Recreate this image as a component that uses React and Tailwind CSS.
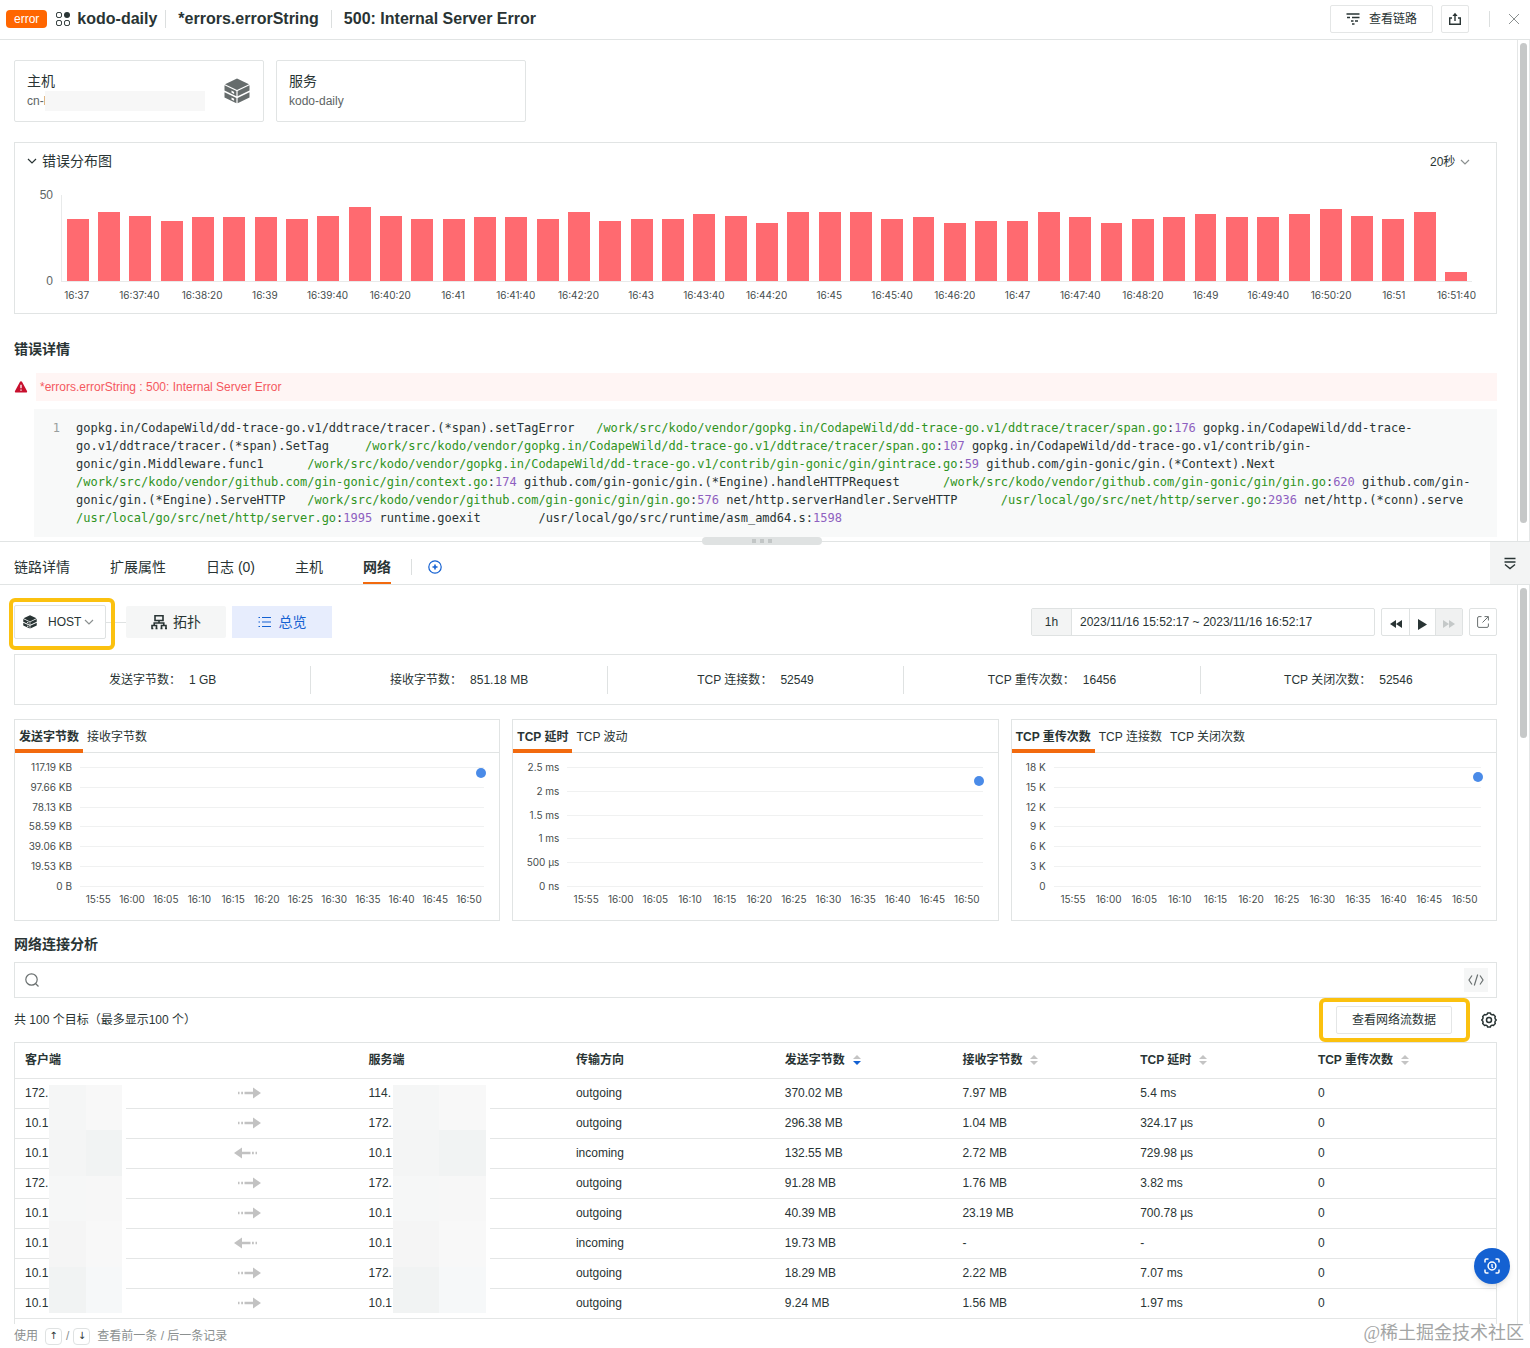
import { Fragment } from "react";

const SANS = "font-['Liberation_Sans','Noto_Sans_CJK_SC',sans-serif]";

const ERROR_BARS = [
  36, 40, 38, 35, 37, 37, 37, 36, 38, 43, 38, 36, 36, 37, 37, 36, 40, 35, 36, 36, 39, 38, 34,
  40, 40, 40, 36, 37, 34, 35, 35, 40, 37, 34, 36, 37, 39, 37, 37, 39, 42, 38, 36, 40, 5,
];

const barTime = (index) => {
  const seconds = index * 20;
  const minute = 37 + Math.floor(seconds / 60);
  const rest = seconds % 60;
  return rest === 0 ? `16:${minute}` : `16:${minute}:${rest}`;
};

// stack trace, one array per printed line: [kind, text]
const STACK = [
  [
    ["t", "gopkg.in/CodapeWild/dd-trace-go.v1/ddtrace/tracer.(*span).setTagError   "],
    ["p", "/work/src/kodo/vendor/gopkg.in/CodapeWild/dd-trace-go.v1/ddtrace/tracer/span.go"],
    ["n", "176"],
    ["t", " gopkg.in/CodapeWild/dd-trace-"],
  ],
  [
    ["t", "go.v1/ddtrace/tracer.(*span).SetTag     "],
    ["p", "/work/src/kodo/vendor/gopkg.in/CodapeWild/dd-trace-go.v1/ddtrace/tracer/span.go"],
    ["n", "107"],
    ["t", " gopkg.in/CodapeWild/dd-trace-go.v1/contrib/gin-"],
  ],
  [
    ["t", "gonic/gin.Middleware.func1      "],
    ["p", "/work/src/kodo/vendor/gopkg.in/CodapeWild/dd-trace-go.v1/contrib/gin-gonic/gin/gintrace.go"],
    ["n", "59"],
    ["t", " github.com/gin-gonic/gin.(*Context).Next"],
  ],
  [
    ["p", "/work/src/kodo/vendor/github.com/gin-gonic/gin/context.go"],
    ["n", "174"],
    ["t", " github.com/gin-gonic/gin.(*Engine).handleHTTPRequest      "],
    ["p", "/work/src/kodo/vendor/github.com/gin-gonic/gin/gin.go"],
    ["n", "620"],
    ["t", " github.com/gin-"],
  ],
  [
    ["t", "gonic/gin.(*Engine).ServeHTTP   "],
    ["p", "/work/src/kodo/vendor/github.com/gin-gonic/gin/gin.go"],
    ["n", "576"],
    ["t", " net/http.serverHandler.ServeHTTP      "],
    ["p", "/usr/local/go/src/net/http/server.go"],
    ["n", "2936"],
    ["t", " net/http.(*conn).serve"],
  ],
  [
    ["p", "/usr/local/go/src/net/http/server.go"],
    ["n", "1995"],
    ["t", " runtime.goexit        /usr/local/go/src/runtime/asm_amd64.s"],
    ["n", "1598"],
  ],
];

const STATS = [
  ["发送字节数", "1 GB"],
  ["接收字节数", "851.18 MB"],
  ["TCP 连接数", "52549"],
  ["TCP 重传次数", "16456"],
  ["TCP 关闭次数", "52546"],
];

const CHARTS = [
  {
    tabs: ["发送字节数", "接收字节数"],
    ticks: ["117.19 KB", "97.66 KB", "78.13 KB", "58.59 KB", "39.06 KB", "19.53 KB", "0 B"],
    axis: "w-[57px]",
    point: 5,
  },
  {
    tabs: ["TCP 延时", "TCP 波动"],
    ticks: ["2.5 ms", "2 ms", "1.5 ms", "1 ms", "500 µs", "0 ns"],
    axis: "w-[46px]",
    point: 12,
  },
  {
    tabs: ["TCP 重传次数", "TCP 连接数", "TCP 关闭次数"],
    ticks: ["18 K", "15 K", "12 K", "9 K", "6 K", "3 K", "0"],
    axis: "w-[34px]",
    point: 8,
  },
];

const TIMES = [
  "15:55", "16:00", "16:05", "16:10", "16:15", "16:20",
  "16:25", "16:30", "16:35", "16:40", "16:45", "16:50",
];

const ROWS = [
  ["172.", "114.", "outgoing", "370.02 MB", "7.97 MB", "5.4 ms", "0"],
  ["10.1", "172.", "outgoing", "296.38 MB", "1.04 MB", "324.17 µs", "0"],
  ["10.1", "10.1", "incoming", "132.55 MB", "2.72 MB", "729.98 µs", "0"],
  ["172.", "172.", "outgoing", "91.28 MB", "1.76 MB", "3.82 ms", "0"],
  ["10.1", "10.1", "outgoing", "40.39 MB", "23.19 MB", "700.78 µs", "0"],
  ["10.1", "10.1", "incoming", "19.73 MB", "-", "-", "0"],
  ["10.1", "172.", "outgoing", "18.29 MB", "2.22 MB", "7.07 ms", "0"],
  ["10.1", "10.1", "outgoing", "9.24 MB", "1.56 MB", "1.97 ms", "0"],
];

const ChevronDown = ({ className }) => (
  <svg className={className} viewBox="0 0 10 10" fill="none" stroke="currentColor" strokeWidth="1.2">
    <path d="M1 3l4 4 4-4" />
  </svg>
);

const AppsIcon = () => (
  <svg className="size-[14px]" viewBox="0 0 14 14" fill="none" stroke="currentColor">
    <rect x="0.5" y="0.5" width="5" height="5" rx="1.6" />
    <circle cx="11" cy="3" r="3" fill="currentColor" stroke="none" />
    <rect x="0.5" y="8.5" width="5" height="5" rx="1.6" />
    <rect x="8.5" y="8.5" width="5" height="5" rx="1.6" />
  </svg>
);

const HostIcon = ({ className }) => (
  <svg className={className} viewBox="0 0 26 26" fill="currentColor">
    <path d="M13 .5L25 6.200 13 11.900 1 6.200z" />
    <path d="M.5 7.300l11.900 5.700v5.300L.5 12.600zM25.500 7.300L13.600 13v5.300l11.900-5.700z" />
    <path d="M.5 14.200l11.900 5.700v5.300L.5 19.500zM25.500 14.200l-11.900 5.700v5.300l11.900-5.700z" />
    <path d="M7.500 12.600l2.600 1.300v2l-2.600-1.300zM7.500 19.500l2.600 1.300v2l-2.600-1.300z" fill="#fff" />
  </svg>
);

const TraceIcon = () => (
  <svg className="size-[14px]" viewBox="0 0 14 14" stroke="currentColor" strokeWidth="1.4" fill="none">
    <path d="M.5 2h13M1 5.500h3M6 5.500h7.500M5 9h2.500M9 9h3M6 12h2.500" />
  </svg>
);

const ShareIcon = () => (
  <svg className="size-[14px]" viewBox="0 0 14 14" stroke="currentColor" strokeWidth="1.4" fill="none">
    <path d="M4 6H1.700v6.300h10.600V6H10M7 9V2" />
    <path d="M7 .8l2.600 3.200H4.400z" fill="currentColor" stroke="none" />
  </svg>
);

const CloseIcon = () => (
  <svg className="size-3" viewBox="0 0 12 12" stroke="currentColor" fill="none">
    <path d="M1 1l10 10M11 1L1 11" />
  </svg>
);

const WarnIcon = () => (
  <svg className="size-[14px]" viewBox="0 0 14 14">
    <path d="M7 1.200c.5 0 .8.200 1 .6l5 9.200c.4.900 0 1.500-.9 1.500H1.900c-.9 0-1.300-.6-.9-1.500l5-9.200c.2-.4.500-.6 1-.6z" fill="#c8102e" />
    <path d="M7 4.800v3.500M7 9.500v1.300" stroke="#fff" strokeWidth="1.300" />
  </svg>
);

const PlusIcon = () => (
  <svg className="size-[14px]" viewBox="0 0 14 14" stroke="currentColor" fill="none">
    <circle cx="7" cy="7" r="6.200" strokeWidth="1.200" />
    <path d="M4.500 7h5M7 4.500v5" strokeWidth="1.600" />
  </svg>
);

const CollapseIcon = () => (
  <svg className="w-3 h-[13px]" viewBox="0 0 12 13" stroke="currentColor" strokeWidth="1.400" fill="none">
    <path d="M.5 1.500h11M.5 5h11M1 7.500l5 4 5-4" />
  </svg>
);

const TopologyIcon = () => (
  <svg className="size-4" viewBox="0 0 16 16" stroke="currentColor" strokeWidth="1.600" fill="none">
    <path d="M4 1.800h8v4.700H4zM1 14.500v-3h4.500v3M10.500 14.500v-3H15v3M8 6.500V9M3.200 11.500V9h9.600v2.500M.3 14.500h2M4.500 14.500h2M9.500 14.500h2M14 14.500h2" />
  </svg>
);

const ListIcon = () => (
  <svg className="w-[13px] h-3" viewBox="0 0 13 12" stroke="currentColor" strokeWidth="1.200" fill="none">
    <path d="M4 1.500h9M4 6h9M4 10.500h9M.500 1.500h1.500M.500 6h1.500M.500 10.500h1.500" />
  </svg>
);

const OpenIcon = () => (
  <svg className="size-3" viewBox="0 0 12 12" stroke="currentColor" fill="none">
    <path d="M4.500.6H2A1.400 1.400 0 0 0 .6 2v8A1.400 1.400 0 0 0 2 11.400h8a1.400 1.400 0 0 0 1.400-1.400V7.500M7.500.6h3.900v3.900M11.200.8L5.500 6.500" />
  </svg>
);

const SearchIcon = () => (
  <svg className="size-[14px]" viewBox="0 0 14 14" stroke="currentColor" strokeWidth="1.200" fill="none">
    <circle cx="6.500" cy="6.500" r="5.700" />
    <path d="M10.500 10.500l3 3" />
  </svg>
);

const CodeIcon = () => (
  <svg className="w-4 h-3" viewBox="0 0 16 12" stroke="currentColor" strokeWidth="1.200" fill="none">
    <path d="M4 1.500L1 6l3 4.500M12 1.500L15 6l-3 4.500M9.700.5l-3.400 11" />
  </svg>
);

const GearIcon = () => (
  <svg className="size-4" viewBox="0 0 16 16" stroke="currentColor" strokeWidth="1.500" fill="none" strokeLinejoin="round">
    <path d="M6.200 2.200L6.600.9h2.800l.4 1.300 1.300.7 1.300-.4 1.900 2-.4 1.300.4 1.200 1 1-1 1-.4 1.200.4 1.300-1.900 2-1.300-.4-1.300.7-.4 1.300H6.600l-.4-1.300-1.300-.7-1.300.4-1.900-2 .4-1.300L1.700 9l-1-1 1-1 .4-1.200-.4-1.300 1.900-2 1.300.4z" />
    <circle cx="8" cy="8" r="2.500" />
  </svg>
);

const ScanIcon = () => (
  <svg className="size-4" viewBox="0 0 16 16" stroke="currentColor" strokeWidth="1.500" fill="none">
    <path d="M1 4.500V2.200C1 1.500 1.500 1 2.200 1h2.300M11.500 1h2.300c.7 0 1.200.5 1.200 1.200v2.300M15 11.500v2.300c0 .7-.5 1.200-1.200 1.200h-2.300M4.500 15H2.200C1.500 15 1 14.500 1 13.800v-2.300" />
    <circle cx="8" cy="8" r="3.900" />
    <path d="M8 6v2.500c0 .8.5 1.200 1.200 1.200" strokeWidth="1.300" />
  </svg>
);

const FlowArrow = ({ back }) => (
  <svg className="block w-7 h-3" viewBox="0 0 28 12" fill="#c2c2c2">
    {back ? (
      <path d="M0 6l8-5.500v4.200h8.500v2.600H8v4.200zM18 4.700h1.800v2.600H18zM21.500 4.700h1.500v2.600h-1.500z" />
    ) : (
      <path d="M27 6l-8 5.500V7.300h-8.500V4.700H19V.5zM7.200 4.700H9v2.600H7.200zM4 4.700h1.500v2.600H4z" />
    )}
  </svg>
);

const SortIcon = ({ active }) => (
  <svg className="w-2 h-[10px]" viewBox="0 0 8 10" fill="#c4c4c4">
    <path d="M4 0l4 4H0z" />
    <path d="M4 10L0 6h8z" fill={active ? "#1461d2" : "#c4c4c4"} />
  </svg>
);

const Scrollbar = ({ thumb }) => (
  <div className="w-[13px] shrink-0 border-x border-[#e4e6e6] pl-[2px] py-[3px]">
    <div className={`w-[7px] rounded-full bg-[#c6c8c8] ${thumb}`} />
  </div>
);

const Header = () => (
  <header className="flex items-center h-10 border-b border-[#e1e4e4] pl-[6px] pr-[10px] pb-[2px]">
    <span className="bg-[#ff6600] text-white text-xs leading-[18px] px-2 rounded">error</span>
    <span className="ml-[9px]"><AppsIcon /></span>
    <h1 className="flex items-center text-base leading-[18px] font-bold">
      <span className="ml-[7px] pr-2">kodo-daily</span>
      <span className="border-l border-[#dcdfdf] pl-3 pr-3">*errors.errorString</span>
      <span className="border-l border-[#dcdfdf] pl-3">500: Internal Server Error</span>
    </h1>
    <div className="ml-auto flex items-center">
      <button className="flex items-center gap-[9px] h-7 w-[103px] justify-center border border-[#e4e6e6] rounded-xs text-xs">
        <TraceIcon />
        查看链路
      </button>
      <button aria-label="分享" className="ml-2 flex items-center justify-center size-7 border border-[#e4e6e6] rounded-xs">
        <ShareIcon />
      </button>
      <span className="ml-5 h-4 w-px bg-[#dcdfdf]" />
      <button aria-label="关闭" className="ml-[18px] text-[#8b9090]"><CloseIcon /></button>
    </div>
  </header>
);

const ErrorChart = () => (
  <section className="mt-5 border border-[#e1e4e4] px-3 pt-2 pb-3">
    <div className="flex items-center justify-between pr-[14px]">
      <h2 className="flex items-center gap-[5px] text-sm leading-5">
        <ChevronDown className="size-[10px]" />
        错误分布图
      </h2>
      <label className="flex items-center gap-1 pt-[2px] text-xs">
        <select aria-label="时间间隔" className="appearance-none w-[26px] outline-none">
          <option>20秒</option>
        </select>
        <ChevronDown className="size-[10px] text-[#8b9090]" />
      </label>
    </div>
    <div className="flex mt-6 pl-[9px] pr-3">
      <div className="w-[17px] h-[86px] flex flex-col justify-between items-end text-xs leading-none text-[#5e6565]">
        <span className="h-0 flex items-center">50</span>
        <span className="h-0 flex items-center">0</span>
      </div>
      <div className="flex-1 ml-2">
        <div className="flex h-[87px] border-l border-b border-[#e8eaea]">
          {ERROR_BARS.map((value, i) => (
            <div key={i} className="flex-1 flex items-end justify-center">
              <div className="w-[70%] bg-[#ff6a70]" style={{ height: `${value * 2}%` }} />
            </div>
          ))}
        </div>
        <div className="flex pt-[7px] font-['Inter',sans-serif] text-[10px] leading-3 text-[#464d4d]">
          {ERROR_BARS.map((_, i) => (
            <div key={i} className="flex-1 w-0 flex justify-center whitespace-nowrap">
              {i % 2 === 0 && <span>{barTime(i)}</span>}
            </div>
          ))}
        </div>
      </div>
    </div>
  </section>
);

const StackTrace = () => (
  <div className="mt-2 ml-5 flex bg-[#f8f9f9] py-[10px] font-['DejaVu_Sans_Mono',monospace] text-xs leading-[18px]">
    <span className="w-[42px] pr-4 text-right text-[#989e9e]">1</span>
    <pre className="flex-1 whitespace-pre-wrap font-[inherit]">
      {STACK.map((line, i) => (
        <Fragment key={i}>
          {line.map(([kind, text], j) => {
            if (kind === "p") return <span key={j} className="text-[#2f9322]">{text}</span>;
            if (kind === "n") return <Fragment key={j}>:<span className="text-[#8e60c0]">{text}</span></Fragment>;
            return text;
          })}
          {"\n"}
        </Fragment>
      ))}
    </pre>
  </div>
);

const DetailTabs = () => (
  <div className="relative flex border-y border-[#e1e4e4] h-11">
    <nav className="flex items-center pl-[14px] pt-2 gap-10 text-sm">
      <button>链路详情</button>
      <button>扩展属性</button>
      <button>日志 (0)</button>
      <button>主机</button>
      <button className="self-stretch pt-[2px] border-b-2 border-[#f26a0e] font-bold">网络</button>
    </nav>
    <div className="flex items-center ml-5 pt-2">
      <span className="h-4 w-px bg-[#dcdfdf]" />
      <button aria-label="添加" className="ml-4 text-[#1461d2]"><PlusIcon /></button>
    </div>
    <button aria-label="收起" className="ml-auto w-10 flex items-center justify-center bg-[#f3f4f4]">
      <CollapseIcon />
    </button>
    {/* drag handle between the two panes */}
    <div className="absolute -top-[5px] left-1/2 -translate-x-1/2 w-[126px] pr-[6px]">
      <div className="h-2 rounded bg-[#dfe2e2] flex items-center justify-center gap-1">
        <i className="size-1 bg-[#c2c6c6]" />
        <i className="size-1 bg-[#c2c6c6]" />
        <i className="size-1 bg-[#c2c6c6]" />
      </div>
    </div>
  </div>
);

const Toolbar = () => (
  <div className="flex items-center justify-between">
    <div className="flex items-center">
      <div className="relative">
        <label className="flex items-center h-[34px] w-[92px] border border-[#dfe2e2] rounded-xs pl-2 text-xs">
          <HostIcon className="size-[14px]" />
          <select aria-label="对象" className="appearance-none ml-[11px] w-9 outline-none">
            <option>HOST</option>
          </select>
          <ChevronDown className="size-[10px] text-[#8b9090]" />
        </label>
        <span className="absolute z-10 -top-[7px] -left-[5px] -right-[9px] -bottom-[11px] border-4 border-[#fbc10f] rounded-md pointer-events-none" />
      </div>
      <span className="w-5 h-px bg-[#dfe2e2]" />
      <button className="flex items-center justify-center gap-[6px] w-[100px] h-8 bg-[#f5f6f6] rounded-xs text-sm">
        <TopologyIcon />
        拓扑
      </button>
      <button className="ml-[6px] flex items-center justify-center gap-2 w-[100px] h-8 bg-[#e7edfd] text-[#1461d2] text-sm">
        <ListIcon />
        总览
      </button>
    </div>
    <div className="flex items-center text-xs">
      <label className="flex h-7 border border-[#dfe2e2] rounded-xs">
        <span className="w-10 flex items-center justify-center bg-[#f3f4f4] border-r border-[#dfe2e2]">1h</span>
        <input
          className="w-[302px] px-2 outline-none"
          defaultValue="2023/11/16 15:52:17 ~ 2023/11/16 16:52:17"
        />
      </label>
      <div className="ml-[6px] flex h-7 border border-[#dfe2e2] rounded-xs">
        <button aria-label="后退" className="w-[27px] pt-1 flex items-center justify-center">
          <svg className="w-3 h-2" viewBox="0 0 12 8" fill="currentColor"><path d="M6 0v8L0 4zM12 0v8L6 4z" /></svg>
        </button>
        <button aria-label="播放" className="w-[27px] pt-1 flex items-center justify-center border-x border-[#dfe2e2]">
          <svg className="w-[9px] h-[11px]" viewBox="0 0 9 11" fill="currentColor"><path d="M0 0l9 5.500L0 11z" /></svg>
        </button>
        <button aria-label="前进" disabled className="w-[26px] pt-1 flex items-center justify-center bg-[#f0f1f1] text-[#c4c8c8]">
          <svg className="w-3 h-2" viewBox="0 0 12 8" fill="currentColor"><path d="M0 0l6 4-6 4zM6 0l6 4-6 4z" /></svg>
        </button>
      </div>
      <button aria-label="新窗口打开" className="ml-[6px] size-7 flex items-center justify-center border border-[#dfe2e2] rounded-xs text-[#6a7070]">
        <OpenIcon />
      </button>
    </div>
  </div>
);

const MetricChart = ({ tabs, ticks, axis, point }) => (
  <section className="flex-1 border border-[#e1e4e4] pb-[14px]">
    <div className="flex h-[33px] border-b border-[#e1e4e4] text-xs">
      {tabs.map((tab, i) => (
        <button
          key={tab}
          className={i === 0 ? "px-1 pt-1 -mb-px border-b-4 border-[#f26a0e] font-bold" : "px-1 pt-px"}
        >
          {tab}
        </button>
      ))}
    </div>
    <div className="flex pt-[14px] pr-[15px] font-['Inter',sans-serif] text-[10px] leading-3 text-[#464d4d]">
      <div className={`${axis} h-[119px] flex flex-col justify-between items-end`}>
        {ticks.map((tick) => (
          <span key={tick} className="h-0 flex items-center whitespace-nowrap">{tick}</span>
        ))}
      </div>
      <div className="flex-1 ml-2">
        <div className="relative h-[120px] flex flex-col justify-between">
          {ticks.map((tick) => (
            <div key={tick} className="h-px bg-[#f0f1f1]" />
          ))}
          <span
            className="absolute size-[10px] rounded-full bg-[#4a8be8] -translate-1/2"
            style={{ left: "99.2%", top: `${point}%` }}
          />
        </div>
        <div className="relative h-[19px]">
          {TIMES.map((time, i) => (
            <span
              key={time}
              className="absolute top-[6px] -translate-x-1/2"
              style={{ left: `${((2.72 + 5 * i) / 60) * 100}%` }}
            >
              {time}
            </span>
          ))}
        </div>
      </div>
    </div>
  </section>
);

const TILES = [
  "bg-[#f5f6f6]", "bg-[#f8f8f8]",
  "bg-[#f4f5f5]", "bg-[#f1f3f3]",
  "bg-[#f6f7f7]", "bg-[#f7f7f7]",
  "bg-[#f5f5f5]", "bg-[#f8f8f8]",
  "bg-[#f1f3f3]", "bg-[#f6f8f9]",
];

// covers the tail of every address in a column, hung on the first row
const Mosaic = ({ className }) => (
  <span className={`absolute z-10 top-[6px] h-[228px] bg-white pr-1 ${className}`}>
    <span className="grid grid-cols-2 h-full">
      {TILES.map((tile, i) => (
        <span key={i} className={tile} />
      ))}
    </span>
  </span>
);

const SortHeader = ({ label, active }) => (
  <th className="pl-[10px] text-left font-bold">
    <button className="flex items-center gap-2">
      {label}
      <SortIcon active={active} />
    </button>
  </th>
);

const ConnectionTable = () => (
  <table className="w-full table-fixed border-collapse text-xs">
    <colgroup>
      <col className="w-[14.8%]" />
      <col className="w-[8.4%]" />
      <col className="w-[14%]" />
      <col className="w-[14.1%]" />
      <col className="w-[12%]" />
      <col className="w-[12%]" />
      <col className="w-[12%]" />
      <col className="w-[12.7%]" />
    </colgroup>
    <thead>
      <tr className="h-[35px] border-b border-[#e4e6e6]">
        <th className="pl-[10px] text-left font-bold">客户端</th>
        <th aria-label="流向" />
        <th className="pl-[10px] text-left font-bold">服务端</th>
        <th className="pl-[10px] text-left font-bold">传输方向</th>
        <SortHeader label="发送字节数" active />
        <SortHeader label="接收字节数" />
        <SortHeader label="TCP 延时" />
        <SortHeader label="TCP 重传次数" />
      </tr>
    </thead>
    <tbody>
      {ROWS.map(([client, server, direction, ...metrics], i) => (
        <tr key={i} className="h-[30px] border-b border-[#e4e6e6]">
          <td className="relative pl-[10px]">
            {client}
            {i === 0 && <Mosaic className="left-[34px] w-[77px]" />}
          </td>
          <td><FlowArrow back={direction === "incoming"} /></td>
          <td className="relative pl-[10px]">
            {server}
            {i === 0 && <Mosaic className="left-[34px] w-[97px]" />}
          </td>
          <td className="pl-[10px]">{direction}</td>
          {metrics.map((metric, j) => (
            <td key={j} className="pl-[10px]">{metric}</td>
          ))}
        </tr>
      ))}
    </tbody>
  </table>
);

const App = () => {
  return (
    <div className={`relative bg-white text-[#293434] ${SANS}`}>
      <Header />

      {/* error pane */}
      <div className="flex">
        <main className="flex-1 min-w-0 pl-[14px] pr-5 pt-5 pb-1">
          <div className="flex gap-3">
            <div className="w-[250px] h-[62px] flex items-center justify-between border border-[#e1e4e4] rounded-xs px-3">
              <div>
                <h3 className="text-sm leading-5">主机</h3>
                <p className="flex text-xs leading-5 text-[#5e6565]">
                  cn-l
                  <span className="w-[160px] h-5 -ml-px bg-[#f7f7f7]" />
                </p>
              </div>
              <HostIcon className="size-[26px] mr-px text-[#666c6c]" />
            </div>
            <div className="w-[250px] h-[62px] flex flex-col justify-center border border-[#e1e4e4] rounded-xs px-3">
              <h3 className="text-sm leading-5">服务</h3>
              <p className="text-xs leading-5 text-[#5e6565]">kodo-daily</p>
            </div>
          </div>

          <ErrorChart />

          <h2 className="mt-[25px] text-sm leading-5 font-bold">错误详情</h2>
          <div className="mt-[14px] flex items-center">
            <WarnIcon />
            <p className="flex-1 ml-2 pl-1 bg-[#fff5f4] text-xs leading-7 text-[#f4595f]">
              *errors.errorString : 500: Internal Server Error
            </p>
          </div>
          <StackTrace />
        </main>
        <Scrollbar thumb="h-[97%]" />
      </div>

      <DetailTabs />

      {/* network pane */}
      <div className="flex">
        <main className="flex-1 min-w-0 pl-[14px] pr-5 pt-5">
          <Toolbar />

          <dl className="mt-[15px] flex h-[51px] items-center border border-[#e1e4e4] text-xs divide-x divide-[#dfe2e2]">
            {STATS.map(([name, value]) => (
              <div key={name} className="flex-1 h-7 flex items-center justify-center gap-2">
                <dt>{name}：</dt>
                <dd>{value}</dd>
              </div>
            ))}
          </dl>

          <div className="mt-[14px] flex gap-3">
            {CHARTS.map((chart) => (
              <MetricChart key={chart.tabs[0]} {...chart} />
            ))}
          </div>

          <h2 className="mt-[13px] text-sm leading-5 font-bold">网络连接分析</h2>
          <label className="mt-2 flex items-center h-9 border border-[#e1e4e4] pl-[10px] pr-2 text-[#6a7070]">
            <SearchIcon />
            <input aria-label="搜索" className="flex-1 ml-2 text-xs outline-none" />
            <button aria-label="代码模式" className="size-6 flex items-center justify-center bg-[#f5f6f6]">
              <CodeIcon />
            </button>
          </label>

          <div className="flex items-center justify-between text-xs">
            <p>共 100 个目标（最多显示100 个）</p>
            <div className="flex items-center">
              <div className="border-4 border-[#fbc10f] rounded-md pl-[13px] pr-[14px] py-1">
                <button className="w-[116px] h-7 border border-[#e4e6e6] rounded-xs">查看网络流数据</button>
              </div>
              <button aria-label="设置" className="ml-[11px]"><GearIcon /></button>
            </div>
          </div>

          <div className="border border-b-0 border-[#e1e4e4] pb-[5px]">
            <ConnectionTable />
          </div>
        </main>
        <Scrollbar thumb="h-[150px]" />
      </div>

      <footer className="flex items-center justify-between h-[25px] pl-[14px] pr-[6px] text-xs text-[#8b9090]">
        <p className="flex items-center">
          使用
          <kbd className="ml-[7px] w-[17px] h-[17px] flex items-center justify-center border border-[#dfe2e2] rounded text-[10px] font-['DejaVu_Sans',sans-serif] text-[#293434]">↑</kbd>
          <span className="mx-1">/</span>
          <kbd className="mr-[7px] w-[17px] h-[17px] flex items-center justify-center border border-[#dfe2e2] rounded text-[10px] font-['DejaVu_Sans',sans-serif] text-[#293434]">↓</kbd>
          查看前一条 / 后一条记录
        </p>
        <p className="pb-[6px] text-lg leading-5 font-['Liberation_Serif','Noto_Sans_CJK_SC',serif] text-[#a3a5a5]">
          @稀土掘金技术社区
        </p>
      </footer>

      <button
        aria-label="快照"
        className="absolute right-5 bottom-[65px] size-9 flex items-center justify-center rounded-full bg-[#1461d2] text-white shadow-md"
      >
        <ScanIcon />
      </button>
    </div>
  );
};

export default App;
